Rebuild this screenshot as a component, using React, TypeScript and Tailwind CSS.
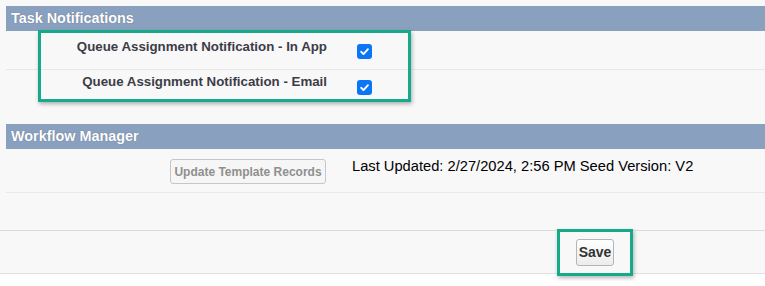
import React from "react";

function Check() {
  return (
    <span className="flex h-[15px] w-[15px] items-center justify-center rounded-[3px] bg-[#0b75f7]">
      <svg width="11" height="11" viewBox="0 0 12 12" fill="none">
        <path d="M2.3 6.3 L4.9 8.8 L9.8 3.4" stroke="#fff" strokeWidth="2" strokeLinecap="round" strokeLinejoin="round" />
      </svg>
    </span>
  );
}

function SubHeader({ title }: { title: string }) {
  return (
    <div className="ml-[6px] flex h-[25px] items-center bg-[#8aa0bf] pl-[5px]">
      <h3 className="text-[14.4px] font-bold text-white [text-shadow:0_0_1px_rgba(60,70,90,0.6)]">{title}</h3>
    </div>
  );
}

export default function App() {
  return (
    <div className="relative h-[286px] w-[765px] bg-white font-['Liberation_Sans',Arial,sans-serif]">
      <div className="bg-[#f8f8f8] pt-[6px]">
        {/* Task Notifications */}
        <SubHeader title="Task Notifications" />
        <div className="ml-[6px] flex h-[39px] items-start border-b border-[#e8e8e8]">
          <div className="mt-[8px] w-[321px] text-right text-[13.3px] font-bold leading-4 text-[#3c3c48]">
            Queue Assignment Notification - In App
          </div>
          <div className="ml-[30px] mt-[13px]">
            <Check />
          </div>
        </div>
        <div className="ml-[6px] flex h-[54px] items-start">
          <div className="mt-[4px] w-[321px] text-right text-[13.3px] font-bold leading-4 text-[#3c3c48]">
            Queue Assignment Notification - Email
          </div>
          <div className="ml-[30px] mt-[10px]">
            <Check />
          </div>
        </div>

        {/* Workflow Manager */}
        <SubHeader title="Workflow Manager" />
        <div className="ml-[6px] flex h-[44px] items-start border-b border-[#e8e8e8]">
          <div className="flex w-[320px] justify-end pt-[10px]">
            <button
              disabled
              className="h-[25px] w-[156px] rounded-[3px] border border-[#c6c6c6] bg-[#f6f6f6] text-[12px] font-bold text-[#8f8f8f]"
            >
              Update Template Records
            </button>
          </div>
          <div className="ml-[26px] pt-[8px] text-[14.7px] leading-[18px] text-black">
            Last Updated: 2/27/2024, 2:56 PM Seed Version: V2
          </div>
        </div>
        <div className="h-[38px] border-b border-[#dcdcdc]" />
        <div className="flex h-[43px] items-start border-b border-[#e2e2e2] pl-[576px] pt-[8px]">
          <button className="h-[27px] w-[38px] rounded-[3px] border border-[#b5b5b5] bg-gradient-to-b from-white to-[#ececec] text-[14px] font-bold text-[#333]">
            Save
          </button>
        </div>
      </div>

      {/* highlight boxes */}
      <div className="absolute left-[38px] top-[30px] h-[72px] w-[373px] border-[3px] border-[#16a98a] shadow-[1px_2px_4px_rgba(0,0,0,0.3)]" />
      <div className="absolute left-[557px] top-[229px] h-[47px] w-[76px] border-[3px] border-[#16a98a] shadow-[1px_2px_4px_rgba(0,0,0,0.3)]" />
    </div>
  );
}
